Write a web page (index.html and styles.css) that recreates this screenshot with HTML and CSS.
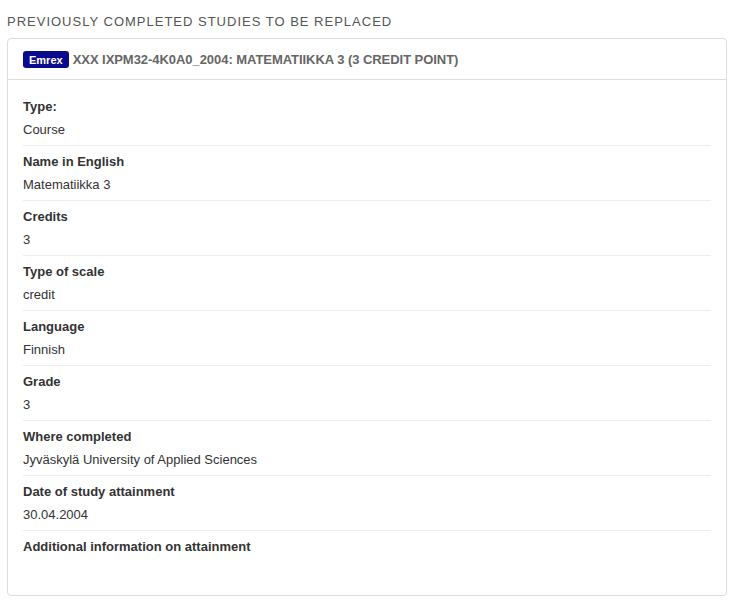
FILE: index.html
```html
<!DOCTYPE html>
<html lang="en">
<head>
    <meta charset="UTF-8">
    <meta name="viewport" content="width=device-width, initial-scale=1.0">
    <title>Previously completed studies</title>
    <link rel="stylesheet" href="styles.css">
</head>
<body>
    <h3 class="section-title">Previously completed studies to be replaced</h3>
    <div class="card">
        <div class="card-header">
            <span class="badge">Emrex</span>
            <span class="card-title">XXX IXPM32-4K0A0_2004: Matematiikka 3 (3 credit point)</span>
        </div>
        <div class="card-body">
            <div class="row">
                <div class="label">Type:</div>
                <div class="value">Course</div>
            </div>
            <div class="row">
                <div class="label">Name in English</div>
                <div class="value">Matematiikka 3</div>
            </div>
            <div class="row">
                <div class="label">Credits</div>
                <div class="value">3</div>
            </div>
            <div class="row">
                <div class="label">Type of scale</div>
                <div class="value">credit</div>
            </div>
            <div class="row">
                <div class="label">Language</div>
                <div class="value">Finnish</div>
            </div>
            <div class="row">
                <div class="label">Grade</div>
                <div class="value">3</div>
            </div>
            <div class="row">
                <div class="label">Where completed</div>
                <div class="value">Jyväskylä University of Applied Sciences</div>
            </div>
            <div class="row">
                <div class="label">Date of study attainment</div>
                <div class="value">30.04.2004</div>
            </div>
            <div class="row last">
                <div class="label">Additional information on attainment</div>
                <div class="value"></div>
            </div>
        </div>
    </div>
</body>
</html>
```

FILE: styles.css
```css
body {
    font-family: "Liberation Sans", Arial, sans-serif;
    font-size: 13px;
    color: #333;
    background-color: #fff;
    margin: 0;
    padding: 13px 10px 0 7px;
}
.section-title {
    margin: 0 0 7px 0;
    font-size: 13px;
    font-weight: normal;
    text-transform: uppercase;
    letter-spacing: 1px;
    color: #555;
    line-height: 18px;
}
.card {
    border: 1px solid #ddd;
    border-radius: 4px;
    background-color: #fff;
}
.card-header {
    display: flex;
    align-items: center;
    padding: 0 15px;
    height: 40px;
    border-bottom: 1px solid #ddd;
}
.badge {
    background-color: #0a0a8c;
    color: #fff;
    font-size: 11px;
    font-weight: bold;
    padding: 3px 6px 2px 6px;
    border-radius: 3px;
    line-height: 12px;
    margin-right: 4px;
}
.card-title {
    font-weight: bold;
    font-size: 13px;
    color: #666;
    text-transform: uppercase;
    letter-spacing: -0.05px;
}
.card-body {
    padding: 11px 15px 10px 15px;
}
.row {
    border-bottom: 1px solid #eee;
    padding: 6px 0 4px 0;
}
.row.last {
    border-bottom: none;
}
.label {
    font-weight: bold;
    line-height: 20px;
    height: 20px;
}
.value {
    line-height: 20px;
    height: 21px;
    margin-top: 3px;
}
```
